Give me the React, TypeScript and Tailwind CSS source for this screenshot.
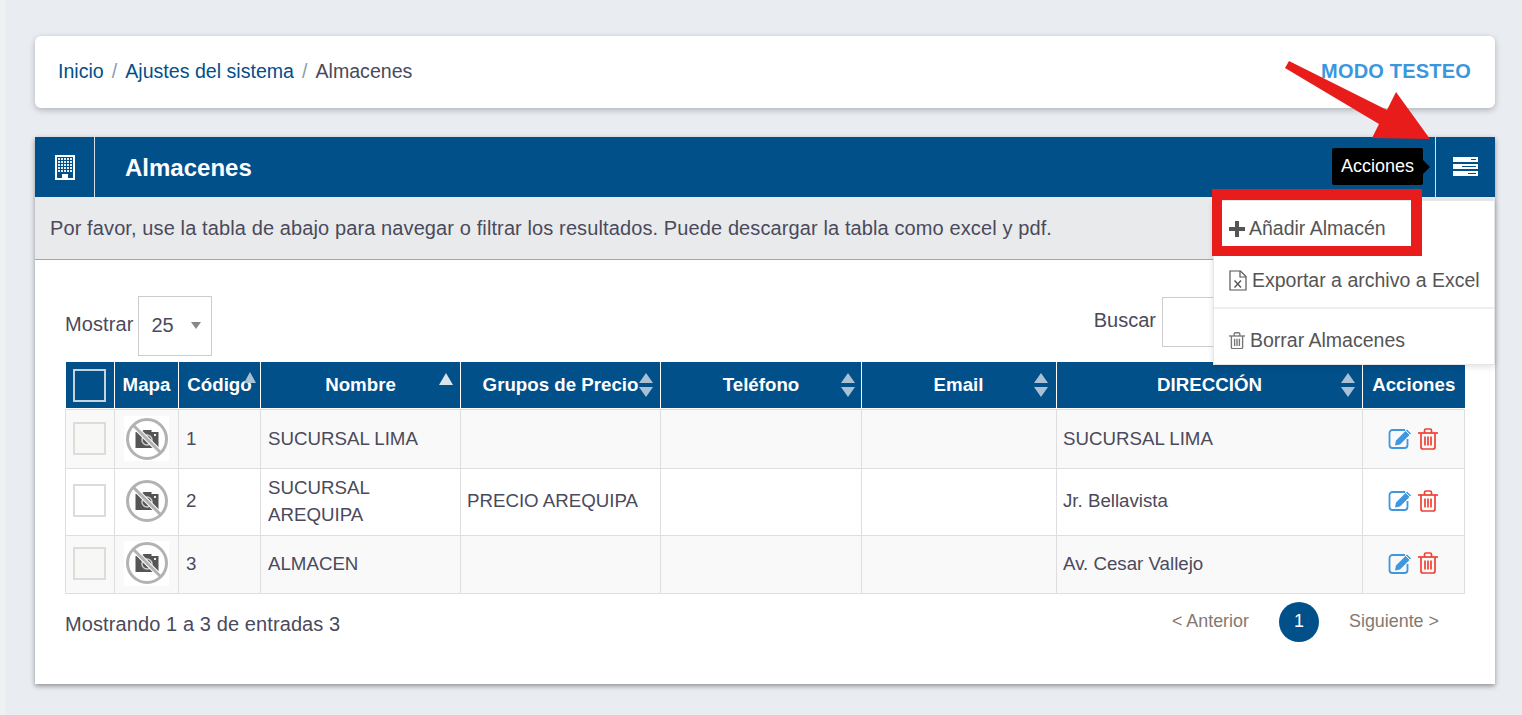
const rows = [
  { code: "1", name: ["SUCURSAL LIMA"], group: "", address: "SUCURSAL LIMA", rowClass: "h-[59px] bg-[#f9f9f9]", boxClass: "bg-[#f7f7f5]" },
  { code: "2", name: ["SUCURSAL", "AREQUIPA"], group: "PRECIO AREQUIPA", address: "Jr. Bellavista", rowClass: "h-[67px] bg-white [&>td]:pb-[2px]", boxClass: "bg-white" },
  { code: "3", name: ["ALMACEN"], group: "", address: "Av. Cesar Vallejo", rowClass: "h-[58px] bg-[#f9f9f9] [&>td]:pb-[2px]", boxClass: "bg-[#f7f7f5]" },
]

function SortArrows({ className = "right-[5px]" }: { className?: string }) {
  return (
    <svg width="14" height="26" viewBox="0 0 14 26" className={`absolute top-[10px] ${className}`}>
      <path d="M7 1 14 11H0Z" fill="#a9c1d5" />
      <path d="M0 15H14L7 25Z" fill="#a9c1d5" />
    </svg>
  )
}

function NoPhoto() {
  return (
    <div className="mx-auto flex h-[45px] w-[45px] items-center justify-center bg-white">
      <svg width="42" height="42" viewBox="0 0 42 42">
        <path d="M9.500 14h6l2-2h8v2h7v16h-23Z" fill="#555" />
        <circle cx="21" cy="22" r="5" fill="none" stroke="#ccc" strokeWidth="1.500" />
        <rect x="28" y="16" width="2" height="2" fill="#eee" />
        <path d="M8 8 34 34" stroke="#fff" strokeWidth="5" />
        <circle cx="21" cy="21" r="19.500" fill="none" stroke="#b2b2b2" strokeWidth="3" />
        <path d="M7 7 35 35" stroke="#b2b2b2" strokeWidth="3" />
      </svg>
    </div>
  )
}

function BuildingIcon() {
  const cols = [3, 6, 9, 12, 15]
  const lines = [3, 6, 9, 12, 15]
  return (
    <svg width="20" height="25" viewBox="0 0 20 25">
      <path fillRule="evenodd" d="M0 0h20v25H0Z M2 2v21h5v-4h6v4h5V2Z" fill="#fff" />
      {lines.map((y) => cols.map((x) => <rect key={`${x}-${y}`} x={x} y={y} width="2" height="2" fill="#fff" opacity="0.9" />))}
      <rect x="8" y="19" width="4" height="4" fill="#fff" />
    </svg>
  )
}

function ServerIcon() {
  return (
    <svg width="25" height="19" viewBox="0 0 25 19">
      <path d="M0 0h25v5H0ZM0 7h25v5H0ZM0 14h25v5H0Z" fill="#fff" />
      <path d="M18 2h5v1h-5ZM9 9h14v1H9ZM15 16h8v1h-8Z" fill="#01508a" />
    </svg>
  )
}

function EditIcon() {
  return (
    <svg width="25" height="21" viewBox="0 0 25 21" fill="none">
      <path d="M17 2H4.500A3 3 0 0 0 1.500 5v12a3 3 0 0 0 3 3h12a3 3 0 0 0 3-3v-6" stroke="#3f97e0" strokeWidth="1.800" />
      <path d="M8 12.500 19 1.500l4 4L12 16.500l-5 1Z" fill="#3f97e0" />
      <path d="M18 3l4 4" stroke="#fff" strokeWidth="1" />
    </svg>
  )
}

function TrashIcon({ color, size = 20 }: { color: string; size?: number }) {
  return (
    <svg width={size} height={size * 1.1} viewBox="0 0 20 22" fill="none" stroke={color} strokeWidth="1.700">
      <path d="M0 5h20" />
      <path d="M6.500 5V2.500a1.500 1.500 0 0 1 1.500-1.500h4a1.500 1.500 0 0 1 1.500 1.500V5" />
      <path d="M3 5v14a2 2 0 0 0 2 2h10a2 2 0 0 0 2-2V5" />
      <path d="M7 8.500v9M10 8.500v9M13 8.500v9" />
    </svg>
  )
}

function ExcelIcon() {
  return (
    <svg width="18" height="21" viewBox="0 0 18 21" fill="none" stroke="#555" strokeWidth="1.200">
      <path d="M1 1h10.500L17 6.500V20H1Z" />
      <path d="M11 1v6h6" />
      <path d="M5.500 10.500 12 17.500M12 10.500 5.500 17.500" strokeWidth="1.400" />
    </svg>
  )
}

export default function App() {
  return (
    <div className="relative h-[715px] w-[1522px] overflow-hidden bg-[#e9ecf1] pt-9 pr-[27px] pl-[35px] font-['Liberation_Sans',Arial,sans-serif] text-[20px] text-[#4a4a5c]">
      <div className="absolute top-0 bottom-0 left-0 w-[5px] bg-[#f0f1f3]" />

      {/* Breadcrumb */}
      <div className="flex h-[72px] items-center justify-between rounded-md bg-white pr-6 pl-[23px] text-[19.6px] shadow-[0_2px_6px_rgba(0,0,0,0.25)]">
        <div className="flex items-center gap-[8px]">
          <span className="text-[#01508a]">Inicio</span>
          <span className="text-[#8a9bb0]">/</span>
          <span className="text-[#01508a]">Ajustes del sistema</span>
          <span className="text-[#8a9bb0]">/</span>
          <span>Almacenes</span>
        </div>
        <span className="pb-[2px] text-[20px] font-bold tracking-[0.2px] text-[#3b97dd]">MODO TESTEO</span>
      </div>

      {/* Panel */}
      <div className="mt-[29px] h-[547px] bg-white shadow-[0_2px_5px_rgba(0,0,0,0.4)]">
        <div className="flex h-[60px] items-stretch bg-[#01508a] text-white">
          <div className="flex w-[60px] items-center justify-center border-r border-[#d5dfe8]">
            <BuildingIcon />
          </div>
          <h1 className="flex-1 pl-[30px] text-[24px] leading-[62px] font-bold">Almacenes</h1>
          <div className="flex w-[60px] items-center justify-center border-l border-[#d5dfe8] pb-[2px]">
            <ServerIcon />
          </div>
        </div>
        <div className="h-[63px] border-b border-[#a5a5a5] bg-[#e9eaec] pl-[15px] text-[20px] leading-[63px] tracking-[0.11px]">
          Por favor, use la tabla de abajo para navegar o filtrar los resultados. Puede descargar la tabla como excel y pdf.
        </div>

        <div className="px-[30px]">
          <div className="flex h-[102px] justify-between">
            <div className="flex items-start gap-[5px] pt-9">
              <span className="mt-[17px] leading-[22px] tracking-[0.1px]">Mostrar</span>
              <div className="flex h-[60px] w-[74px] items-center justify-between border border-[#ccc] pr-[10px] pb-[2px] pl-3">
                <span>25</span>
                <svg width="10" height="7" viewBox="0 0 10 7"><path d="M0 0h10L5 7Z" fill="#888" /></svg>
              </div>
            </div>
            <div className="flex items-start gap-[6px] pt-[37px] pr-[143px]">
              <span className="mt-[12px] leading-[22px]">Buscar</span>
              <div className="h-[50px] w-[160px] border border-[#ccc]" />
            </div>
          </div>

          <table className="w-[1399px] table-fixed border-collapse text-[18.7px]">
            <colgroup>
              <col className="w-[49px]" />
              <col className="w-[64px]" />
              <col className="w-[82px]" />
              <col className="w-[200px]" />
              <col className="w-[200px]" />
              <col className="w-[201px]" />
              <col className="w-[195px]" />
              <col className="w-[306px]" />
              <col className="w-[102px]" />
            </colgroup>
            <thead>
              <tr className="h-[46px] bg-[#01508a] text-white [&>th]:relative [&>th]:border-l [&>th]:border-white [&>th]:font-bold [&>th:first-child]:border-l-0">
                <th className="pl-[7px]">
                  <div className="h-[33px] w-[33px] border-2 border-[#c5d3df]" />
                </th>
                <th>Mapa</th>
                <th className="whitespace-nowrap">
                  Código
                  <svg width="12" height="12" viewBox="0 0 12 12" className="absolute top-[10px] right-[4px]"><path d="M6 0 12 11H0Z" fill="#a9c1d5" /></svg>
                </th>
                <th>
                  Nombre
                  <svg width="14" height="12" viewBox="0 0 14 12" className="absolute top-[11px] right-[7px]"><path d="M7 0 14 12H0Z" fill="#d8e3ec" /></svg>
                </th>
                <th className="whitespace-nowrap">
                  Grupos de Precio
                  <SortArrows className="right-[7px]" />
                </th>
                <th>
                  Teléfono
                  <SortArrows className="right-[6px]" />
                </th>
                <th className="pr-[1px]">
                  Email
                  <SortArrows className="right-[8px]" />
                </th>
                <th>
                  DIRECCIÓN
                  <SortArrows className="right-[7px]" />
                </th>
                <th>Acciones</th>
              </tr>
            </thead>
            <tbody>
              <tr className="h-[1px]"><td colSpan={9} /></tr>
              {rows.map((row) => (
                <tr key={row.code} className={`${row.rowClass} border border-[#dedede] [&>td]:border-l [&>td]:border-[#dedede] [&>td]:px-[7px] [&>td]:leading-[27px]`}>
                  <td>
                    <div className={`h-[33px] w-[33px] border-2 border-[#dcdcd8] ${row.boxClass}`} />
                  </td>
                  <td className="!px-0">
                    <NoPhoto />
                  </td>
                  <td>{row.code}</td>
                  <td>
                    {row.name.map((line) => (
                      <div key={line}>{line}</div>
                    ))}
                  </td>
                  <td className="!px-[6px]">{row.group}</td>
                  <td />
                  <td />
                  <td className="!pl-[6px]">{row.address}</td>
                  <td>
                    <div className="flex items-center justify-center gap-[5px] pr-[1px]">
                      <EditIcon />
                      <TrashIcon color="#ef4136" />
                    </div>
                  </td>
                </tr>
              ))}
            </tbody>
          </table>

          <div className="flex items-start justify-between pt-[14px]">
            <span className="mt-[5px] leading-[22px] tracking-[0.1px]">Mostrando 1 a 3 de entradas 3</span>
            <div className="-mt-[6px] flex items-center gap-[30px] pr-[26px] text-[17.9px] text-[#84786f]">
              <span>&lt; Anterior</span>
              <span className="flex h-10 w-10 items-center justify-center rounded-full bg-[#01508a] text-white">1</span>
              <span>Siguiente &gt;</span>
            </div>
          </div>
        </div>
      </div>

      {/* Tooltip */}
      <div className="absolute top-[148px] left-[1332px] flex h-[37px] w-[91px] items-center justify-center rounded-[2px] bg-black text-[18px] text-white">
        Acciones
        <span className="absolute top-[12px] -right-[7px] h-0 w-0 border-y-[7px] border-l-[7px] border-y-transparent border-l-black" />
      </div>

      {/* Dropdown */}
      <div className="absolute top-[200px] left-[1213px] h-[165px] w-[282px] border border-[#e4e6ea] bg-white text-[19.5px] text-[#555] shadow-[0_2px_6px_rgba(0,0,0,0.12)]">
        <div className="flex h-[55px] items-center gap-[4px] pl-[15px]">
          <svg width="16" height="16" viewBox="0 0 16 16"><path d="M6 0h4v6h6v4h-6v6H6v-6H0V6h6Z" fill="#555" /></svg>
          <span>Añadir Almacén</span>
        </div>
        <div className="flex h-[53px] items-center gap-[5px] border-b-2 border-[#eeeeee] pb-[2px] pl-[15px]">
          <ExcelIcon />
          <span className="whitespace-nowrap">Exportar a archivo a Excel</span>
        </div>
        <div className="flex h-[55px] items-center gap-[5px] pt-[8px] pl-[15px]">
          <TrashIcon color="#777" size={16} />
          <span>Borrar Almacenes</span>
        </div>
      </div>

      {/* Annotations */}
      <div className="absolute top-[189px] left-[1212px] h-[67px] w-[210px] border-[10px] border-t-[11px] border-r-[11px] border-[#e91c1c]" />
      <svg width="160" height="90" viewBox="1280 55 160 90" className="absolute top-[55px] left-[1280px]">
        <path d="M1285 68 1289 61 1387 110 1396 92 1430 139 1372 138 1379 124Z" fill="#e91c1c" />
      </svg>
    </div>
  )
}
